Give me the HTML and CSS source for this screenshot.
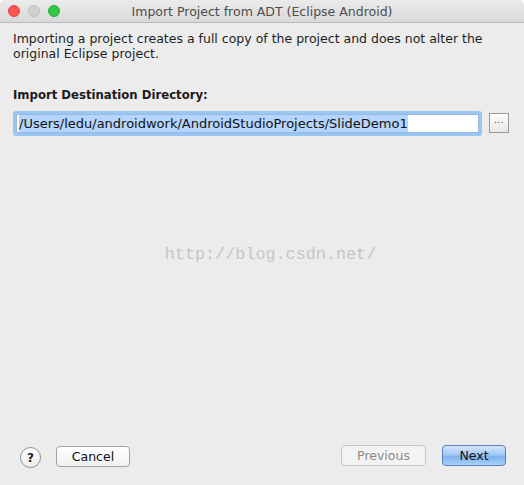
FILE: index.html
```html
<!DOCTYPE html>
<html lang="en">
<head>
<meta charset="utf-8">
<title>Import Project from ADT (Eclipse Android)</title>
<link rel="stylesheet" href="styles.css">
</head>
<body>
<div class="window">
  <header class="titlebar">
    <div class="lights">
      <span class="light red"></span>
      <span class="light gray"></span>
      <span class="light green"></span>
    </div>
    <div class="title">Import Project from ADT (Eclipse Android)</div>
    <div class="spacer"></div>
  </header>
  <main class="content">
    <p class="desc">Importing a project creates a full copy of the project and does not alter the<br>original Eclipse project.</p>
    <div class="label">Import Destination Directory:</div>
    <div class="field-row">
      <div class="field"><span class="sel">/Users/ledu/androidwork/AndroidStudioProjects/SlideDemo1</span></div>
      <button class="browse">...</button>
    </div>
    <div class="watermark">http://blog.csdn.net/</div>
  </main>
  <footer class="footer">
    <button class="help">?</button>
    <button class="btn cancel">Cancel</button>
    <div class="grow"></div>
    <button class="btn previous" disabled>Previous</button>
    <button class="btn next">Next</button>
  </footer>
</div>
</body>
</html>
```

FILE: styles.css
```css
html, body {
  margin: 0;
  padding: 0;
  background: #ffffff;
}

body {
  font-family: "DejaVu Sans", "Noto Sans", sans-serif;
  font-size: 12px;
  color: #1a1a1a;
}

.window {
  width: 524px;
  height: 485px;
  background: #ececec;
  display: flex;
  flex-direction: column;
  border-radius: 5px 5px 0 0;
  overflow: hidden;
}

.titlebar {
  height: 22px;
  flex: none;
  display: grid;
  grid-template-columns: 1fr auto 1fr;
  align-items: center;
  background: linear-gradient(#ebebeb, #d9d9d9);
  border-bottom: 1px solid #b9b9b9;
}

.lights {
  display: flex;
  gap: 8px;
  padding-left: 8px;
}

.light {
  width: 12px;
  height: 12px;
  border-radius: 50%;
  box-sizing: border-box;
}

.red { background: #fc5753; border: 1px solid #df4744; }
.gray { background: #d0d0d0; border: 1px solid #bebebe; }
.green { background: #33c748; border: 1px solid #27aa35; }

.title {
  font-size: 12.5px;
  color: #4d4d4d;
  padding-top: 1px;
}

.content {
  flex: 1;
  padding: 0 12px 0 13px;
  display: flex;
  flex-direction: column;
}

.desc {
  margin: 8px 0 0;
  font-size: 12.5px;
  line-height: 15px;
  color: #1e1e1e;
}

.label {
  font-weight: bold;
  font-size: 11.7px;
  margin-top: 27px;
  line-height: 15px;
}

.field-row {
  display: flex;
  align-items: center;
  margin-top: 10px;
  gap: 10px;
}

.field {
  width: 463px;
  height: 19px;
  margin-left: 3px;
  box-sizing: border-box;
  background: #ffffff;
  border: 1px solid #9cb9dc;
  box-shadow: 0 0 0 3px #98c6f5;
  border-radius: 1px;
  display: flex;
  align-items: center;
  padding-left: 2px;
}

.sel {
  background: #b4d5fe;
  font-size: 13px;
  line-height: 17px;
  color: #111;
}

.browse {
  width: 20px;
  height: 20px;
  padding: 0 0 6px;
  border: 1px solid #989898;
  background: linear-gradient(#fdfdfd, #e9e9e9);
  font-family: "DejaVu Sans", sans-serif;
  font-size: 9px;
  line-height: 10px;
  color: #333;
  letter-spacing: 0.5px;
}

.watermark {
  margin-top: 112px;
  align-self: center;
  margin-left: 16px;
  font-family: "Liberation Mono", "DejaVu Sans Mono", monospace;
  font-size: 16.8px;
  color: #c6c6c6;
}

.footer {
  flex: none;
  display: flex;
  align-items: center;
  height: 21px;
  padding: 0 18px 19px 20px;
}

.help {
  width: 21px;
  height: 21px;
  border-radius: 50%;
  border: 1px solid #8e8e8e;
  background: linear-gradient(#ffffff, #ececec);
  font-family: "DejaVu Sans", sans-serif;
  font-weight: bold;
  font-size: 12px;
  color: #222;
  padding: 0;
  margin-top: 4px;
}

.btn {
  height: 21px;
  border-radius: 4px;
  border: 1px solid #a3a3a3;
  background: linear-gradient(#ffffff, #f1f1f1);
  font-family: "DejaVu Sans", sans-serif;
  font-size: 12.5px;
  color: #111;
  padding: 0;
}

.cancel {
  width: 74px;
  margin-left: 15px;
  margin-top: 2px;
}

.grow { flex: 1; }

.previous {
  width: 85px;
  color: #8a8a8a;
  border-color: #c6c6c6;
  background: #f3f3f3;
}

.next {
  width: 64px;
  margin-left: 16px;
  border-color: #5b7cbd;
  background: linear-gradient(#d3e6fb, #a4c9f5 45%, #7db1f0 55%, #a8d0f9);
}
```
